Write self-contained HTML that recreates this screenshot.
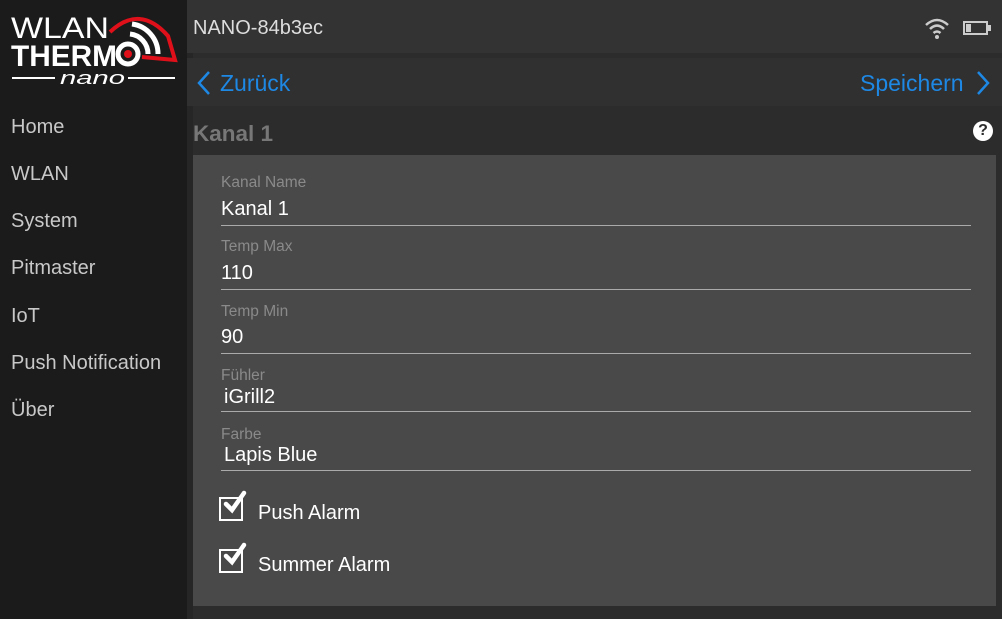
<!DOCTYPE html>
<html><head><style>
*{margin:0;padding:0;box-sizing:border-box}
body{width:1002px;height:619px;background:#2c2c2c;font-family:"Liberation Sans",sans-serif;position:relative;overflow:hidden}
.side{position:absolute;left:0;top:0;width:187px;height:619px;background:#1b1b1b}
.side a{position:absolute;left:11px;color:#c8c8c8;font-size:20px}
.hdr{position:absolute;left:187px;top:0;width:815px;height:53px;background:#333}
.nav{position:absolute;left:187px;top:58px;width:815px;height:48px;background:#303030}
.blue{color:#1e88e5;font-size:23px;position:absolute;top:12px}
.card{position:absolute;left:193px;top:155px;width:803px;height:451px;background:#494949}
.lbl{position:absolute;left:28px;color:#8a8a8a;font-size:15.5px}
.val{position:absolute;left:28px;color:#fff;font-size:20px}
.line{position:absolute;left:28px;width:750px;height:1px;background:#aaa}
.cb{position:absolute;left:26px;width:24px;height:24px;border:2.5px solid #fff}
.cbl{position:absolute;left:65px;color:#fff;font-size:20px}
</style></head><body>
<div class="side">
<svg width="187" height="90" style="position:absolute;left:0;top:0">
<text x="11" y="38" fill="#fff" font-family="Liberation Sans" font-size="30" textLength="98" lengthAdjust="spacingAndGlyphs">WLAN</text>
<text x="11" y="66" fill="#fff" font-family="Liberation Sans" font-weight="bold" font-size="30" textLength="106" lengthAdjust="spacingAndGlyphs">THERM</text>
<circle cx="128" cy="54" r="10" fill="none" stroke="#fff" stroke-width="5"/>
<circle cx="128" cy="54" r="4" fill="#e0101a"/>
<path d="M110 32 Q140 4 168 36 L175 60 L142 57" fill="none" stroke="#e0101a" stroke-width="4"/>
<path d="M130 34 A20 20 0 0 1 148 54" fill="none" stroke="#fff" stroke-width="5"/>
<path d="M132 24 A30 30 0 0 1 158 54" fill="none" stroke="#fff" stroke-width="5"/>
<line x1="12" y1="78" x2="55" y2="78" stroke="#fff" stroke-width="2"/>
<line x1="128" y1="78" x2="175" y2="78" stroke="#fff" stroke-width="2"/>
<text x="60" y="84" fill="#fff" font-style="italic" font-size="18" font-family="Liberation Sans" textLength="65" lengthAdjust="spacingAndGlyphs">nano</text>
</svg>
<a style="top:116px">Home</a><a style="top:163px">WLAN</a><a style="top:210px">System</a><a style="top:257px">Pitmaster</a><a style="top:305px">IoT</a><a style="top:352px">Push Notification</a><a style="top:399px">Über</a>
</div>
<div style="position:absolute;left:187px;top:0;width:6px;height:619px;background:#262626"></div>
<div class="hdr"><span style="position:absolute;left:6px;top:17px;color:#ddd;font-size:20px">NANO-84b3ec</span>
<svg style="position:absolute;left:736px;top:16px" width="30" height="24"><path d="M3 9 Q14 -1 25 9" fill="none" stroke="#ccc" stroke-width="2.5"/><path d="M7 13 Q14 6 21 13" fill="none" stroke="#ccc" stroke-width="2.5"/><path d="M10.5 17 Q14 14 17.5 17" fill="none" stroke="#ccc" stroke-width="2.5"/><circle cx="14" cy="21" r="2" fill="#ccc"/></svg>
<svg style="position:absolute;left:776px;top:20px" width="30" height="16"><rect x="1" y="2" width="23" height="12" fill="none" stroke="#ccc" stroke-width="2"/><rect x="25" y="5" width="3" height="6" fill="#ccc"/><rect x="3" y="4" width="5" height="8" fill="#ccc"/></svg>
</div>
<div class="nav">
<svg style="position:absolute;left:9px;top:12px" width="16" height="26"><path d="M13 2 L3 13 L13 24" fill="none" stroke="#1e88e5" stroke-width="2.5"/></svg>
<span class="blue" style="left:33px">Zurück</span>
<span class="blue" style="left:673px">Speichern</span>
<svg style="position:absolute;left:788px;top:12px" width="16" height="26"><path d="M3 2 L13 13 L3 24" fill="none" stroke="#1e88e5" stroke-width="2.5"/></svg>
</div>
<div style="position:absolute;left:193px;top:121px;color:#777;font-size:22.5px;font-weight:bold">Kanal 1</div>
<div style="position:absolute;left:973px;top:121px;width:20px;height:20px;border-radius:50%;background:#fff;color:#2c2c2c;font-weight:bold;font-size:16px;text-align:center;line-height:20px">?</div>
<div class="card">
<div class="lbl" style="top:19px">Kanal Name</div><div class="val" style="top:43px">Kanal 1</div><div class="line" style="top:70px"></div>
<div class="lbl" style="top:83px">Temp Max</div><div class="val" style="top:107px">110</div><div class="line" style="top:134px"></div>
<div class="lbl" style="top:148px">Temp Min</div><div class="val" style="top:171px">90</div><div class="line" style="top:198px"></div>
<div class="lbl" style="top:212px">Fühler</div><div class="val" style="top:231px;left:31px">iGrill2</div><div class="line" style="top:256px"></div>
<div class="lbl" style="top:271px">Farbe</div><div class="val" style="top:289px;left:31px">Lapis Blue</div><div class="line" style="top:315px"></div>
<div class="cb" style="top:342px"></div><svg style="position:absolute;left:29px;top:333px" width="26" height="26"><path d="M4 16 L10 22 L22 5" fill="none" stroke="#fff" stroke-width="4.5" stroke-linecap="round"/></svg>
<div class="cbl" style="top:347px">Push Alarm</div>
<div class="cb" style="top:394px"></div><svg style="position:absolute;left:29px;top:385px" width="26" height="26"><path d="M4 16 L10 22 L22 5" fill="none" stroke="#fff" stroke-width="4.5" stroke-linecap="round"/></svg>
<div class="cbl" style="top:399px">Summer Alarm</div>
</div>
</body></html>
